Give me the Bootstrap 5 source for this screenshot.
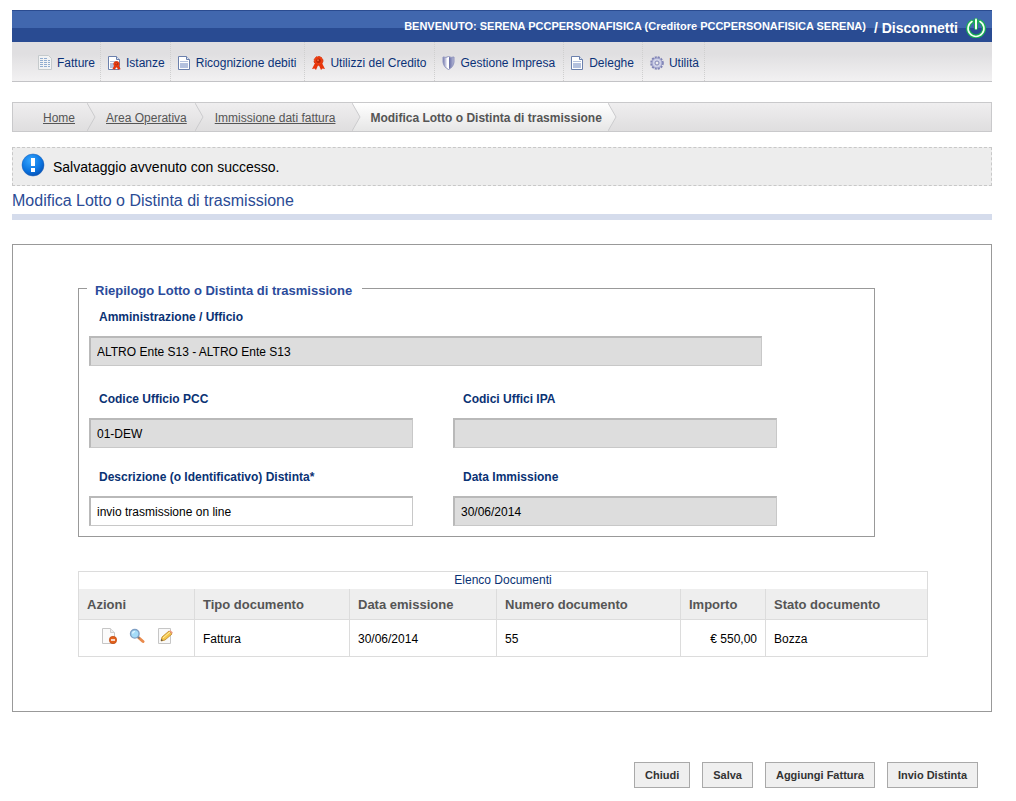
<!DOCTYPE html>
<html lang="it">
<head>
<meta charset="utf-8">
<meta name="viewport" content="width=device-width, initial-scale=1">
<title>Modifica Lotto o Distinta di trasmissione</title>
<link rel="stylesheet" href="https://cdn.jsdelivr.net/npm/bootstrap@5.3.0/dist/css/bootstrap.min.css">
<style>
body { font-family: "Liberation Sans", Arial, sans-serif; font-size: 12px; line-height: 18px; color: #000; background: #fff; }
.page-wrap { padding: 10px 24px 14px 12px; }
.topbar { height: 32px; padding-right: 6px; font-size: 11px; color: #fff; font-weight: bold; background: linear-gradient(#2a4b90 1px, #4167ae 1px, #4167ae 18px, #294b92 18px); }
.topbar a { color: #fff; font-size: 14px; text-decoration: none; }
.mainmenu { height: 40px; padding-left: 19px; border-bottom: 1px solid #c3c3c6; background: linear-gradient(#e0dfe1 30%, #f2f1f2); }
.mainmenu .nav-link { height: 39px; padding: 2px 5px 0 7px; gap: 5px; font-size: 12px; color: #0b3278; border-right: 1px dotted #cfcfcf; }
.trail { height: 30px; margin-top: 20px; padding: 0 0 0 30px; font-size: 12px; border: 1px solid #c9c9cb; background: linear-gradient(#efeeef, #dfdedf); }
.trail a { color: #555; }
.trail li { height: 28px; }
.trail span, .trail a { padding: 2px 0 0; }
.trail .step { margin-right: 10px; }
.trail .here { padding: 2px 6px 0 9px; align-self: stretch; font-weight: bold; color: #555; background: linear-gradient(#fff, #e6e6e6); }
.notice { height: 39px; margin: 15px 0 0; padding: 0 0 3px 8px; gap: 8px; font-size: 14px; color: #000; background: #ededed; border: 1px dashed #c8c8c8; border-radius: 0; }
.notice span { padding-top: 3px; }
.page-title { margin: 0 0 24px; padding: 5px 0 3px; font-size: 16px; line-height: 20px; font-weight: normal; color: #2b4b95; border-bottom: 6px solid #d5dcec; }
.panel { padding: 31px 63px 54px 65px; border: 1px solid #999; }
.summary { margin-right: 53px; padding: 0 8px 10px; border: 1px solid #999; }
.summary legend { float: none; width: auto; margin: 0; padding: 6px 10px 0 8px; font-size: 13px; line-height: 18px; font-weight: bold; color: #2b4b9b; }
.fields { display: grid; grid-template-columns: 1fr 1fr; column-gap: 40px; row-gap: 20px; padding: 8px 89px 0 2px; }
.fields .wide { grid-column: 1 / -1; margin: 0 15px 4px 0; }
.fields label { display: block; margin: 0 0 10px; padding-left: 10px; font-weight: bold; color: #0a3274; }
.fields .form-control { height: 30px; padding: 0 6px; font-size: 12px; color: #000; background: #fff; border: 1px solid #c8c8c8; border-top: 2px solid #b9b9b9; border-left: 2px solid #b9b9b9; border-radius: 0; }
.fields .form-control[readonly] { background: #ddd; }
.doc-table { table-layout: fixed; margin: 34px 0 0; border: 1px solid #dcdcdc; border-top: 0; font-size: 12px; }
.doc-table caption { padding: 0; text-align: center; line-height: 17px; color: #0a3274; border: 1px solid #dcdcdc; border-bottom: 0; }
.doc-table th { height: 30px; padding: 2px 8px 0; font-size: 13px; color: #555; background: #eee; vertical-align: middle; border: 1px solid #dcdcdc; border-top: 0; }
.doc-table td { height: 37px; padding: 2px 8px 0; color: #000; vertical-align: middle; border: 1px solid #dcdcdc; }
.c-act { width: 116px; } .c-type { width: 155px; } .c-date { width: 147px; } .c-num { width: 184px; } .c-amt { width: 85px; }
.acts { gap: 12px; padding: 0 0 6px 14px; }
.acts button { padding: 0; border: 0; background: none; line-height: 0; }
.cmds { gap: 12px; margin-top: 50px; padding-right: 14px; }
.cmds .btn { height: 26px; padding: 0 10px; font-size: 11px; line-height: 18px; font-weight: bold; color: #333; background: #efefef; border: 1px solid #a9a9a9; border-radius: 0; }
</style>
</head>
<body>
<svg width="0" height="0" class="d-block" aria-hidden="true">
  <defs>
    <linearGradient id="gWhite" x1="0" y1="0" x2="0" y2="1"><stop offset="0" stop-color="#fff"/><stop offset="1" stop-color="#e6e6e6"/></linearGradient>
    <linearGradient id="gShield"><stop offset="0" stop-color="#6f74ae"/><stop offset=".4" stop-color="#fff"/><stop offset=".5" stop-color="#fff"/><stop offset=".55" stop-color="#666ca6"/><stop offset="1" stop-color="#b9bcd8"/></linearGradient>
    <radialGradient id="gInfo" cx=".4" cy=".3" r=".8"><stop offset="0" stop-color="#35a6ff"/><stop offset=".6" stop-color="#0a74e0"/><stop offset="1" stop-color="#0648a8"/></radialGradient>
    <symbol id="chev" viewBox="0 0 9 28"><path d="M0 0l8 14-8 14" fill="none" stroke="#cbcbcd"/></symbol>
    <symbol id="doc" viewBox="0 0 13 14"><path d="M.5.5h8l3 3v10H.5z" fill="#fff" stroke="#6b80ad"/><path d="M8.500.5v3h3" fill="#dfe5f2" stroke="#6b80ad"/><path d="M2 5h8v1H2zM2 7h8v5H2z" fill="#b4c1de"/></symbol>
    <symbol id="rosette" viewBox="0 0 13 14"><path d="M3 7L0 13l2.500-.5L4 14l2.200-5h.6L9 14l1.500-1.500 2.500.5-3-6z" fill="#e8350c"/><circle cx="6.500" cy="4.800" r="4.400" fill="#ee3c10" stroke="#d93208" stroke-dasharray="2 .8"/><circle cx="6.500" cy="4.800" r="2.300" fill="#b52708"/><circle cx="6" cy="4.300" r="1" fill="#f2633a"/></symbol>
  </defs>
</svg>
<div class="page-wrap">
  <header>
    <div class="topbar d-flex align-items-center justify-content-end">
      <span>BENVENUTO: SERENA PCCPERSONAFISICA (Creditore PCCPERSONAFISICA SERENA)</span>
      <a href="#" class="d-flex align-items-center ms-2 pt-1"><span>/ Disconnetti</span>
        <svg class="ms-2" width="20" height="20" viewBox="0 0 20 20" aria-hidden="true"><g fill="none" stroke-linecap="round"><g stroke="#18b052" stroke-width="4"><path d="M6 3.500a8 8 0 1 0 8 0M10 2v8"/></g><g stroke="#f4fff4" stroke-width="1.600"><path d="M6 3.500a8 8 0 1 0 8 0"/><path d="M10 1.500v9" stroke-width="2"/></g></g></svg>
      </a>
    </div>
    <nav class="mainmenu nav flex-nowrap" aria-label="Menu principale">
      <a class="nav-link d-flex align-items-center" href="#"><svg width="14" height="15" viewBox="0 0 14 15"><path d="M.5.5h10l3 3v11H.5z" fill="#f2f3f4" stroke="#c5cacc"/><path d="M2 3.500h3M2 5.500h3M2 7.500h3M2 9.500h3M2 11.500h3M6 3.500h3M6 5.500h3M6 7.500h3M6 9.500h3M6 11.500h3M10 5.500h2M10 7.500h2M10 9.500h2M10 11.500h2" stroke="#91add0"/></svg>Fatture</a>
      <a class="nav-link d-flex align-items-center" href="#"><svg width="13" height="14" viewBox="0 0 13 14"><use href="#doc" width="13" height="14"/><use href="#rosette" x="4" y="5" width="9" height="9"/></svg>Istanze</a>
      <a class="nav-link d-flex align-items-center pe-2" href="#"><svg width="13" height="14"><use href="#doc"/></svg>Ricognizione debiti</a>
      <a class="nav-link d-flex align-items-center pe-2" href="#"><svg width="13" height="14"><use href="#rosette"/></svg>Utilizzi del Credito</a>
      <a class="nav-link d-flex align-items-center pe-2" href="#"><svg width="13" height="14" viewBox="0 0 13 14"><path d="M1 1q3 1 5.500-.5Q9 2 12 1v5q-.5 5-5.500 7.500Q1.500 11 1 6z" fill="url(#gShield)" stroke="#8f94bd"/></svg>Gestione Impresa</a>
      <a class="nav-link d-flex align-items-center pe-2" href="#"><svg width="13" height="14"><use href="#doc"/></svg>Deleghe</a>
      <a class="nav-link d-flex align-items-center" href="#"><svg width="14" height="14" viewBox="0 0 14 14"><circle cx="7" cy="7" r="5.800" fill="none" stroke="#7d81b5" stroke-width="2" stroke-dasharray="2.040 1"/><circle cx="7" cy="7" r="5" fill="#cfd1e8" stroke="#9397c4"/><circle cx="7" cy="7" r="2" fill="#eee" stroke="#8286b5"/></svg>Utilità</a>
    </nav>
  </header>

  <nav aria-label="Percorso">
    <ol class="trail d-flex list-unstyled mb-0">
      <li class="step d-flex align-items-center"><a href="#">Home</a><svg class="ms-2 ps-1" width="13" height="28"><use href="#chev" width="9" height="28"/></svg></li>
      <li class="step d-flex align-items-center"><a href="#">Area Operativa</a><svg class="ms-2" width="10" height="28"><use href="#chev" width="9" height="28"/></svg></li>
      <li class="d-flex align-items-center"><a href="#">Immissione dati fattura</a><svg class="ms-3" width="10" height="28"><path d="M1 0l8 14-8 14h9V0z" fill="url(#gWhite)"/><use href="#chev" x="1" width="9" height="28"/></svg></li>
      <li class="d-flex align-items-center" aria-current="page"><span class="here d-flex align-items-center">Modifica Lotto o Distinta di trasmissione</span><svg width="9" height="28"><path d="M0 0l8 14-8 14z" fill="url(#gWhite)"/><use href="#chev" width="9" height="28"/></svg></li>
    </ol>
  </nav>

  <div class="notice alert d-flex align-items-center" role="status">
    <svg width="24" height="24" viewBox="0 0 24 24" aria-hidden="true"><circle cx="12" cy="12" r="11" fill="url(#gInfo)" stroke="#1a61b8" stroke-width=".5"/><path d="M10 5h4v8h-4zM10 15h4v4h-4z" fill="#fff"/></svg>
    <span>Salvataggio avvenuto con successo.</span>
  </div>
  <h1 class="page-title">Modifica Lotto o Distinta di trasmissione</h1>

  <main>
    <form>
      <div class="panel">
        <fieldset class="summary">
          <legend>Riepilogo Lotto o Distinta di trasmissione</legend>
          <div class="fields">
            <div class="wide"><label for="amm">Amministrazione / Ufficio</label><input class="form-control" id="amm" type="text" readonly value="ALTRO Ente S13 - ALTRO Ente S13"></div>
            <div><label for="pcc">Codice Ufficio PCC</label><input class="form-control" id="pcc" type="text" readonly value="01-DEW"></div>
            <div><label for="ipa">Codici Uffici IPA</label><input class="form-control" id="ipa" type="text" readonly></div>
            <div><label for="desc">Descrizione (o Identificativo) Distinta*</label><input class="form-control" id="desc" type="text" value="invio trasmissione on line"></div>
            <div><label for="data">Data Immissione</label><input class="form-control" id="data" type="text" readonly value="30/06/2014"></div>
          </div>
        </fieldset>

        <table class="table caption-top doc-table">
          <caption>Elenco Documenti</caption>
          <colgroup><col class="c-act"><col class="c-type"><col class="c-date"><col class="c-num"><col class="c-amt"><col></colgroup>
          <thead><tr><th scope="col">Azioni</th><th scope="col">Tipo documento</th><th scope="col">Data emissione</th><th scope="col">Numero documento</th><th scope="col">Importo</th><th scope="col">Stato documento</th></tr></thead>
          <tbody><tr>
            <td><div class="acts d-flex">
              <button type="button" aria-label="Elimina"><svg width="16" height="16" viewBox="0 0 16 16"><path d="M1.500.5h8l4 4v11h-12z" fill="#fbfbfb" stroke="#c6c6c6"/><path d="M9.500.5v4h4" fill="#eee" stroke="#d0d0d0"/><circle cx="12" cy="12" r="3.700" fill="#e2611c" stroke="#b9430b" stroke-width=".6"/><path d="M10 12h4" stroke="#fff" stroke-width="1.500"/></svg></button>
              <button type="button" aria-label="Visualizza"><svg width="16" height="16" viewBox="0 0 16 16"><path d="M9.500 9.500l4.500 4" stroke="#e98a4c" stroke-width="3" stroke-linecap="round"/><path d="M8.500 8.500l2 2" stroke="#777" stroke-width="1.500"/><circle cx="5.800" cy="5.800" r="4.300" fill="#a5dcf8" stroke="#7f9fc4" stroke-width="1.400"/><path d="M3.500 5.500q.5-2 2.500-2" stroke="#e9f8ff" fill="none" stroke-width="1.200"/></svg></button>
              <button type="button" aria-label="Modifica"><svg width="16" height="16" viewBox="0 0 16 16"><path d="M1.500.500h12v15h-12z" fill="#f9f9f9" stroke="#c6c6c6"/><path d="M4 13l1-4 7-6 3 3-7 6z" fill="#f4c54a" stroke="#bd8427" stroke-width=".8"/><path d="M6 10l7-6" stroke="#fff0a5"/><path d="M12 3l3 3 .8-1.500-2.300-2.300z" fill="#ec9b80"/><path d="M4 13l.5-2L6 12.300z" fill="#444"/></svg></button>
            </div></td>
            <td>Fattura</td><td>30/06/2014</td><td>55</td><td class="text-end">€ 550,00</td><td>Bozza</td>
          </tr></tbody>
        </table>
      </div>

      <div class="cmds d-flex justify-content-end">
        <button type="button" class="btn">Chiudi</button>
        <button type="submit" class="btn">Salva</button>
        <button type="button" class="btn">Aggiungi Fattura</button>
        <button type="button" class="btn">Invio Distinta</button>
      </div>
    </form>
  </main>
</div>
<script src="https://cdn.jsdelivr.net/npm/bootstrap@5.3.0/dist/js/bootstrap.bundle.min.js"></script>
</body>
</html>
